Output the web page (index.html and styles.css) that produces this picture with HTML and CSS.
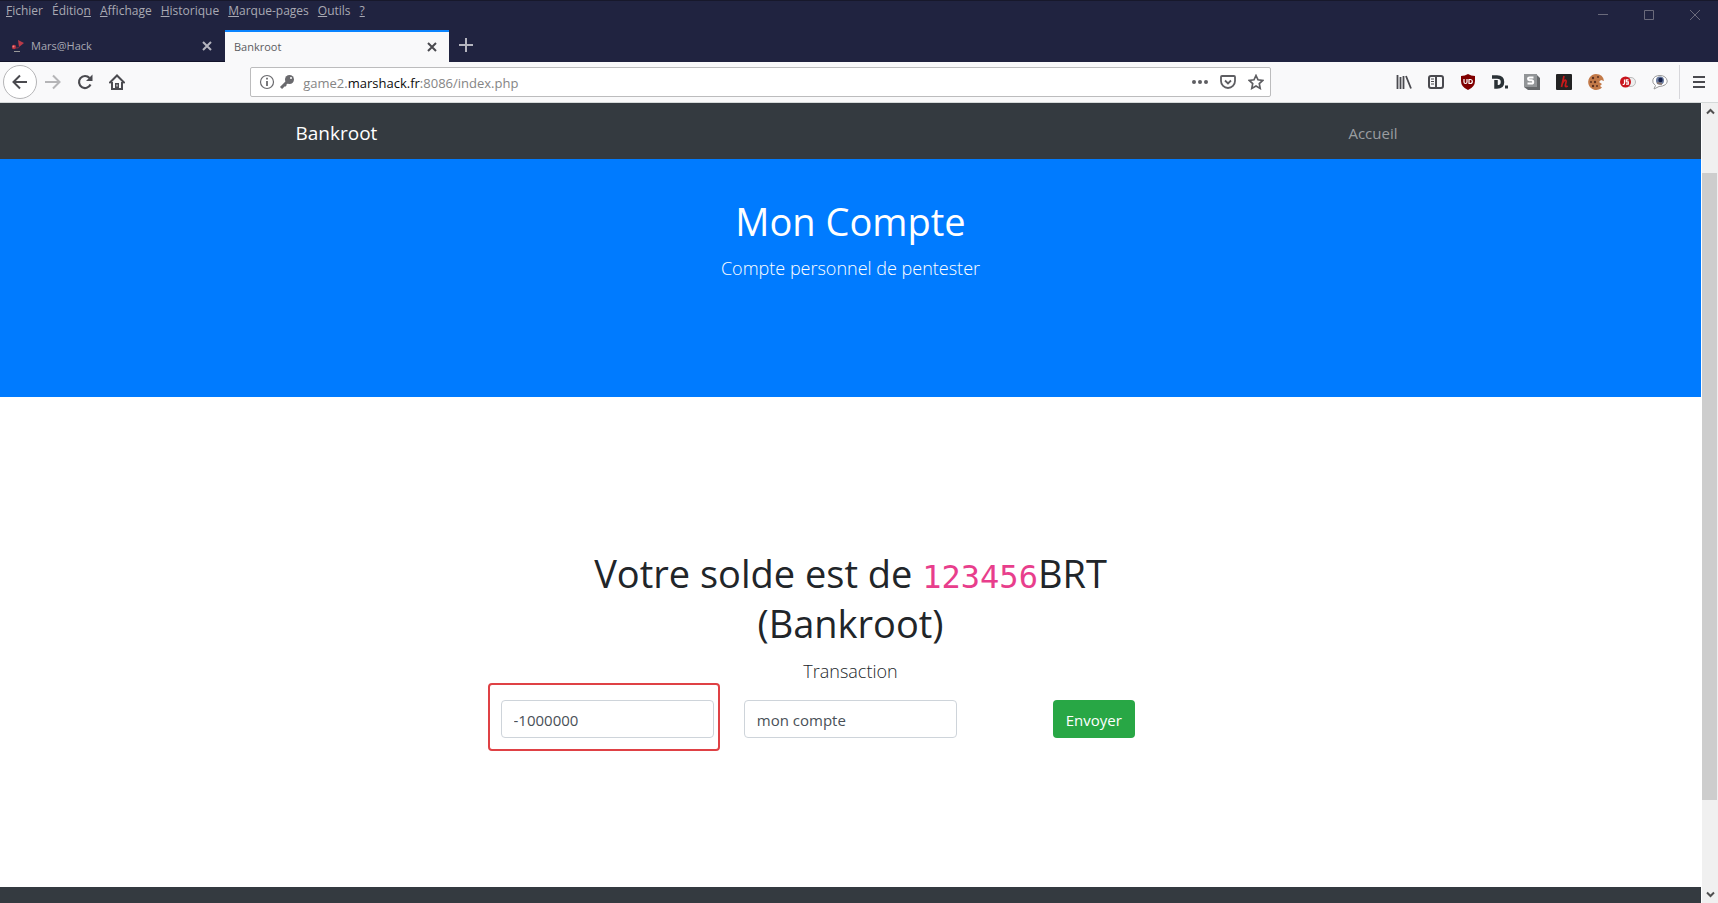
FILE: index.html
```html
<!DOCTYPE html>
<html lang="fr">
<head>
<meta charset="utf-8">
<title>Bankroot</title>
<link rel="stylesheet" href="styles.css">
</head>
<body>
<header class="titlebar">
  <div class="titlebar-top">
    <nav class="menubar" aria-label="Menu">
      <button class="menu-item"><u>F</u>ichier</button>
      <button class="menu-item">Éditio<u>n</u></button>
      <button class="menu-item"><u>A</u>ffichage</button>
      <button class="menu-item"><u>H</u>istorique</button>
      <button class="menu-item"><u>M</u>arque-pages</button>
      <button class="menu-item"><u>O</u>utils</button>
      <button class="menu-item"><u>?</u></button>
    </nav>
    <div class="window-controls">
      <button class="window-button" aria-label="Réduire"><svg width="12" height="12"><path d="M1 5.500h10"/></svg></button>
      <button class="window-button" aria-label="Agrandir"><svg width="12" height="12"><path d="M1.500 1.500h9v9h-9z"/></svg></button>
      <button class="window-button" aria-label="Fermer"><svg width="12" height="12"><path d="M1 1l10 10M11 1L1 11"/></svg></button>
    </div>
  </div>
  <div class="tabs">
    <div class="tab">
      <svg class="favicon" width="14" height="14" viewBox="0 0 14 14"><path d="M7 1l6 3-5 4z" fill="#b83a48"/><circle cx="3" cy="8" r="2.200" fill="#b8323f"/><path d="M5 8.500l4-1-2 2H4z" fill="#6d2a45"/><circle cx="2.500" cy="7.500" r="1" fill="#e88"/><path d="M3 12.500h6" stroke="#999" stroke-width="1"/></svg>
      <span class="tab-title">Mars@Hack</span>
      <button class="tab-close" aria-label="Fermer l’onglet"><svg width="12" height="12"><path d="M2 2l8 8M10 2l-8 8"/></svg></button>
    </div>
    <div class="tab tab-active">
      <span class="tab-title">Bankroot</span>
      <button class="tab-close" aria-label="Fermer l’onglet"><svg width="12" height="12"><path d="M2 2l8 8M10 2l-8 8"/></svg></button>
    </div>
    <button class="new-tab" aria-label="Nouvel onglet"><svg width="16" height="16"><path d="M8 1v14M1 8h14"/></svg></button>
  </div>
</header>

<div class="toolbar">
  <div class="nav-buttons">
    <button class="icon-button back" aria-label="Précédent"><svg width="16" height="16"><path d="M15 8H1.500M8 1.500L1.500 8 8 14.500"/></svg></button>
    <button class="icon-button forward" aria-label="Suivant"><svg width="16" height="16"><path d="M0 8h14.500M8 1.500L14.500 8 8 14.500"/></svg></button>
    <button class="icon-button" aria-label="Actualiser"><svg width="16" height="16"><path d="M13.500 10.500A6 6 0 1 1 12.500 4" stroke-width="2.200"/><path d="M15.500 0.500v6.500H9z" fill="#4a4a4f" stroke="none"/></svg></button>
    <button class="icon-button" aria-label="Accueil du navigateur"><svg width="16" height="16"><path d="M1 8.500L8 1.500l7 7" stroke-linecap="round"/><path d="M3 8v7h10V8M8 8.500" /><path d="M6 9h4v6H6z" fill="#4a4a4f" stroke="none"/><path d="M8 10.500v2" stroke="#f9f9fa" stroke-width="1"/></svg></button>
  </div>
  <div class="address-bar">
    <svg class="site-icon" width="16" height="16"><circle cx="8" cy="8" r="6.500" stroke-width="1.200"/><path d="M8 7v5M8 3.800v1.800" stroke-width="1.800"/></svg>
    <svg class="site-icon" width="16" height="16"><circle cx="10.500" cy="5.500" r="4.500" fill="#6a6a6e" stroke="none"/><path d="M8 8l-6 6" stroke-width="3"/><path d="M5 10l2 2" stroke-width="2"/><circle cx="12" cy="4" r="1" fill="#fff" stroke="none"/></svg>
    <div class="url">game2.<b>marshack.fr</b>:8086/index.php</div>
    <button class="icon-button" aria-label="Actions"><svg width="16" height="16"><g fill="#5e5e62" stroke="none"><circle cx="2" cy="8" r="2"/><circle cx="8" cy="8" r="2"/><circle cx="14" cy="8" r="2"/></g></svg></button>
    <button class="icon-button" aria-label="Pocket"><svg width="16" height="16"><path d="M2 2h12q1 0 1 1v4a7 7 0 0 1-14 0V3q0-1 1-1zM5 6.500l3 3 3-3" stroke-width="1.800"/></svg></button>
    <button class="icon-button" aria-label="Marquer cette page"><svg width="16" height="16"><path d="M8 1.500l2 4.300 4.800.6-3.500 3.200.9 4.800L8 12l-4.200 2.400.9-4.800L1.200 6.400 6 5.800z" stroke-width="1.700"/></svg></button>
  </div>
  <div class="extensions">
    <button class="icon-button" aria-label="Bibliothèque"><svg width="16" height="16"><path d="M1.500 1v14M4.500 3v12M7.500 2v13M10 2l5 12.500" stroke-width="1.800"/></svg></button>
    <button class="icon-button" aria-label="Panneaux latéraux"><svg width="16" height="16"><rect x="1" y="2" width="14" height="12" rx="2"/><path d="M8 2v12"/><path d="M3 5h3M3 7.500h3M3 10h3" stroke-width="1"/></svg></button>
    <button class="icon-button" aria-label="uBlock Origin"><svg width="16" height="16"><path d="M8 0q3 2 7 2v5q0 6-7 9-7-3-7-9V2q4 0 7-2z" fill="#800000" stroke="none"/><path d="M4 5v3q0 1.500 1.500 1.500T7 8V5M9 5.500v4h1.300a2 2 0 0 0 0-4z" stroke="#fff" stroke-width="1.200"/></svg></button>
    <button class="icon-button" aria-label="Dashlane"><svg width="16" height="16"><path d="M0 3h5q5.500 0 5.500 5T5 13H4V6" stroke="#2b3236" stroke-width="3.500"/><rect x="13" y="11.500" width="3" height="3" fill="#2b3236" stroke="none"/></svg></button>
    <button class="icon-button" aria-label="Scripts"><svg width="16" height="16"><path d="M0 1h13l3 3v12H4l-4-3z" fill="#66696b" stroke="none"/><rect width="13" height="13" fill="#929597" stroke="none"/><path d="M9.500 3.500H5.500q-1.500 0-1.500 1.300t1.500 1.500h2q1.700 0 1.700 1.600T7.500 9.500h-4" stroke="#fff" stroke-width="2"/></svg></button>
    <button class="icon-button" aria-label="Historique étendu"><svg width="16" height="16"><rect width="16" height="16" rx="1" fill="#232323" stroke="none"/><path d="M8 2L5.500 13M6 10q2.500-5 4-3.500c1 1-1.500 5-.5 6 .5.500 1.500 0 2-.8" stroke="#c91a1a" stroke-width="1.700"/></svg></button>
    <button class="icon-button" aria-label="Cookies"><svg width="16" height="16"><path d="M8 0a8 8 0 1 0 6 13.500L12 12l2-2-3-2 2-2 3 1Q15 0 8 0z" fill="#c37a49" stroke="none"/><g fill="#5b3020" stroke="none"><circle cx="5" cy="4" r="1.200"/><circle cx="10" cy="3" r="1"/><circle cx="3" cy="8" r="1"/><circle cx="7" cy="8" r="1.200"/><circle cx="5" cy="12" r="1.200"/><circle cx="9" cy="12" r="1"/></g></svg></button>
    <button class="icon-button" aria-label="JavaScript"><svg width="16" height="16"><rect x="4" y="3.500" width="11.500" height="9" rx="4.500" fill="#eee" stroke="#bbb" stroke-width="1"/><circle cx="5.500" cy="8" r="5.500" fill="#c8141c" stroke="none"/><path d="M4.500 5.500v4q0 1-1.800.8M8.500 5.800H6.300v2h2v2.400H6" stroke="#fff" stroke-width="1.200"/></svg></button>
    <button class="icon-button" aria-label="Confidentialité"><svg width="16" height="16"><path d="M3.500 11.500Q0 9 .8 6 2 1.500 8 1.500T15.300 7Q15 12 7 12.500L2 15z" fill="#fff" stroke="#999" stroke-width="1"/><circle cx="8" cy="6.500" r="4" fill="#68799d" stroke="none"/><circle cx="8.500" cy="6" r="2.200" fill="#15204a" stroke="none"/><path d="M5 9l5 1" stroke="#8b7b76"/></svg></button>
    <button class="icon-button app-menu" aria-label="Ouvrir le menu"><svg width="16" height="16"><path d="M2 3h12M2 8h12M2 13h12"/></svg></button>
  </div>
</div>

<div class="viewport">
  <div class="page">
    <nav class="navbar">
      <div class="container">
        <a class="brand" href="#">Bankroot</a>
        <a class="nav-link" href="#">Accueil</a>
      </div>
    </nav>
    <section class="hero">
      <h1>Mon Compte</h1>
      <p class="lead">Compte personnel de pentester</p>
    </section>
    <main class="account">
      <div class="account-column">
        <h2>Votre solde est de <code>123456</code>BRT<br>(Bankroot)</h2>
        <p class="lead">Transaction</p>
        <form class="transfer">
          <div class="field field-marked"><input type="text" value="-1000000" aria-label="Montant"></div>
          <div class="field"><input type="text" value="mon compte" aria-label="Destinataire"></div>
          <div class="field"><button class="submit" type="button">Envoyer</button></div>
        </form>
      </div>
    </main>
    <footer class="footer"></footer>
  </div>
  <div class="scrollbar" aria-hidden="true">
    <svg class="scroll-arrow" width="9" height="7"><path d="M1 5.500L4.500 2 8 5.500"/></svg>
    <div class="scroll-track"><div class="scroll-thumb"></div></div>
    <svg class="scroll-arrow" width="9" height="7"><path d="M1 1.500L4.500 5 8 1.500"/></svg>
  </div>
</div>
</body>
</html>
```
FILE: styles.css
```css
* { box-sizing: border-box; }
body {
  margin: 0;
  min-height: 100vh;
  display: flex;
  flex-direction: column;
  font-family: "Open Sans", "Noto Sans", sans-serif;
  font-size: 16px;
  line-height: 24px;
  color: #212529;
  background: #fff;
}
button { font: inherit; color: inherit; background: none; border: 0; padding: 0; }
svg { display: block; flex: none; fill: none; }

.titlebar { background: #202340; border-top: 1px solid #17182b; color: #a9a9b3; font-size: 11px; line-height: 16px; }
.titlebar-top { display: flex; justify-content: space-between; height: 29px; }
.menubar { display: flex; gap: 9px; padding: 2px 6px; align-items: flex-start; font-size: 12px; }
.window-controls { display: flex; height: 28px; }
.window-button { width: 46px; display: grid; place-items: center; }
.window-button svg { stroke: #6a6a7b; }

.tabs { display: flex; height: 32px; }
.tab { width: 225px; display: flex; align-items: center; gap: 6px; padding: 1px 10px 0 11px; border-bottom: 1px solid #12132a; }
.tab-active { width: 224px; padding: 0 9px; background: #f9f9fa; color: #5c5c61; border-top: 2px solid #0a84ff; border-bottom: 0; }
.tab-title { flex: 1; }
.tab-close { padding: 2px; }
.tab-close svg { stroke: #b5b5bf; stroke-width: 2; }
.tab-active .tab-close svg { stroke: #4a4a4f; }
.new-tab { padding: 0 9px 2px; }
.new-tab svg { stroke: #b5b5bf; stroke-width: 2; }

.toolbar { display: flex; align-items: center; height: 41px; background: #f9f9fa; border-bottom: 1px solid #d5d9d9; }
.toolbar svg { stroke: #4a4a4f; stroke-width: 2; }
.nav-buttons { display: flex; align-items: center; width: 130px; padding-left: 3px; gap: 16px; }
.back { width: 34px; height: 34px; border: 1px solid #b5b5b7; border-radius: 50%; background: #fff; display: grid; place-items: center; }
.forward { margin-left: -8px; }
.toolbar .forward svg { stroke: #b5b5b7; }
.address-bar {
  flex: 1;
  display: flex;
  align-items: center;
  gap: 12px;
  height: 30px;
  margin: 0 7%;
  padding: 0 6px 0 8px;
  background: #fff;
  border: 1px solid #bcbcbd;
  border-radius: 2px;
}
.toolbar .site-icon { stroke: #6a6a6e; }
.site-icon + .site-icon { margin-left: -8px; }
.address-bar .icon-button svg { stroke: #5e5e62; }
.url { flex: 1; margin-left: -4px; padding-top: 2px; font-size: 13px; line-height: 20px; color: #858585; }
.url b { font-weight: 400; color: #0c0c0d; }
.extensions { display: flex; gap: 16px; align-items: center; padding: 0 11px 0 5px; }
.app-menu { border-left: 1px solid #d7d7db; padding: 9px 0 9px 11px; margin-left: -5px; }

.viewport { flex: 1; display: flex; }
.page { flex: 1; display: flex; flex-direction: column; border-right: 1px solid #fff; }
.navbar { background: #343a40; }
.container { display: flex; justify-content: space-between; align-items: center; max-width: 1140px; height: 56px; margin: 0 auto; padding: 3px 15px 0; }
.brand { font-size: 19px; color: #fff; text-decoration: none; }
.nav-link { padding: 0 8px; font-size: 15px; color: #9a9da0; text-decoration: none; }

.hero { padding: 38px 15px 114px; background: #007bff; color: #fff; text-align: center; }
h1, h2 { margin: 0 0 8px; font-weight: 400; font-size: 38px; line-height: 48px; }
h2 { line-height: 50px; }
.lead { margin: 0; font-size: 18px; line-height: 30px; font-weight: 300; }
code { font-family: "DejaVu Sans Mono", monospace; font-size: 32px; color: #e83e8c; line-height: 1; }

.account { flex: 1; padding: 151px 15px 0; }
.account-column { max-width: 730px; margin: 0 auto; text-align: center; }
.transfer { display: grid; grid-template-columns: repeat(3, 1fr); margin-top: 14px; }
.field { position: relative; padding: 0 15px; }
.field input { display: block; width: 100%; height: 38px; padding: 7px 12px 5px; border: 1px solid #ced4da; border-radius: 4px; font: inherit; font-size: 15px; color: #495057; background: #fff; }
.field-marked::before { content: ""; position: absolute; inset: -17px 9px -13px 2px; border: 2px solid #df4145; border-radius: 4px; }
.submit { height: 38px; padding: 2px 13px 0; border-radius: 4px; background: #28a745; color: #fff; font-size: 15px; }
.footer { height: 16px; background: #343a40; }

.scrollbar { width: 16px; display: flex; flex-direction: column; align-items: center; background: #f0f0f0; }
.scroll-arrow { margin: 5px 0; stroke: #505050; stroke-width: 2; }
.scroll-track { flex: 1; width: 100%; padding: 53px 1px 0 0; }
.scroll-thumb { height: 88%; background: #cdcdcd; }
```
